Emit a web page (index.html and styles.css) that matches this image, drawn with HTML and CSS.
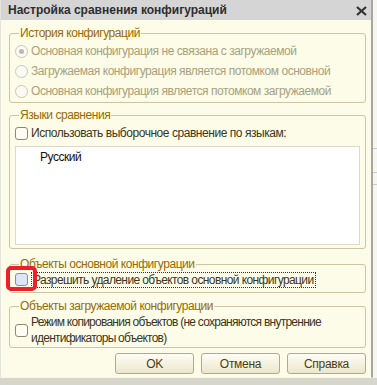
FILE: index.html
```html
<!DOCTYPE html>
<html lang="ru">
<head>
    <meta charset="UTF-8">
    <title>Настройка сравнения конфигураций</title>
    <link rel="stylesheet" href="styles.css">
</head>
<body>
    <div class="screen">
        <div class="dialog">
            <div class="titlebar">
                <span class="title">Настройка сравнения конфигураций</span>
                <svg class="close" width="11" height="10" viewBox="0 0 11 10">
                    <path d="M1 1 L10 9 M10 1 L1 9" stroke="#333" stroke-width="2.2" fill="none"/>
                </svg>
            </div>

            <div class="content">
                <!-- История конфигураций -->
                <div class="group group-history">
                    <span class="group-title">История конфигураций</span>
                    <label class="option disabled"><span class="radio checked"></span>Основная конфигурация не связана с загружаемой</label>
                    <label class="option disabled"><span class="radio"></span>Загружаемая конфигурация является потомком основной</label>
                    <label class="option disabled"><span class="radio"></span>Основная конфигурация является потомком загружаемой</label>
                </div>

                <!-- Языки сравнения -->
                <div class="group group-lang">
                    <span class="group-title">Языки сравнения</span>
                    <label class="option"><span class="checkbox"></span>Использовать выборочное сравнение по языкам:</label>
                    <div class="lang-list">
                        <div class="lang-item">Русский</div>
                    </div>
                </div>

                <!-- Объекты основной конфигурации -->
                <div class="group group-main">
                    <span class="group-title">Объекты основной конфигурации</span>
                    <label class="option option-short"><span class="checkbox hover"></span><span class="focus">Разрешить удаление объектов основной конфигурации</span></label>
                    <span class="marker"></span>
                </div>

                <!-- Объекты загружаемой конфигурации -->
                <div class="group group-loaded">
                    <span class="group-title">Объекты загружаемой конфигурации</span>
                    <label class="option option-multi"><span class="checkbox"></span><span class="multi-text">Режим копирования объектов (не сохраняются внутренние<br>идентификаторы объектов)</span></label>
                </div>

                <div class="buttons">
                    <button class="btn">OK</button>
                    <button class="btn">Отмена</button>
                    <button class="btn">Справка</button>
                </div>
            </div>
        </div>
        <div class="backdrop"></div>
    </div>
</body>
</html>
```

FILE: styles.css
```css
body {
    margin: 0;
    background: #d6d6ca;
    font-family: "Liberation Sans", Arial, sans-serif;
    font-size: 12px;
    letter-spacing: -0.45px;
    color: #3b3520;
}

.screen {
    display: flex;
    height: 378px;
}

.dialog {
    width: 370px;
    border-left: 1px solid #e4e4dc;
    border-right: 2px solid #a6a6a6;
    border-bottom: 1px solid #f6f6f0;
    background: #fcfce9;
    display: flex;
    flex-direction: column;
}

/* Полоска окна позади диалога */
.backdrop {
    flex: 1;
    background:
        linear-gradient(#c9c9cf, #c9c9cf) 0 148px / 100% 1px no-repeat,
        linear-gradient(#c9c9cf, #c9c9cf) 0 172px / 100% 1px no-repeat,
        linear-gradient(#c9c9cf, #c9c9cf) 0 184px / 100% 1px no-repeat,
        #f6f6ef;
}

.titlebar {
    height: 20px;
    background: #d5d5d5;
    display: flex;
    align-items: center;
    justify-content: space-between;
    padding: 0 4px 0 7px;
}

.title {
    font-weight: bold;
    font-size: 12px;
    letter-spacing: 0;
    color: #2e2e2e;
}

.close {
    margin-top: 2px;
}

.content {
    padding: 13px 5px 0 8px;
}

.group {
    position: relative;
    border: 1px solid #cbc5a3;
    border-radius: 3px;
    padding: 7px 5px 1px;
}

/* Заголовок группы лежит поверх верхней линии рамки */
.group-title {
    position: absolute;
    top: -8px;
    left: 9px;
    padding: 0 1px;
    line-height: 15px;
    background: #fcfce9;
    color: #9a6a00;
}

.group-lang {
    margin-top: 12px;
    padding-bottom: 0;
}

.group-main {
    margin-top: 15px;
    padding-top: 6px;
    padding-bottom: 4px;
}

.group-loaded {
    margin-top: 13px;
}

.option {
    display: flex;
    align-items: center;
    height: 20px;
    white-space: nowrap;
}

.option.disabled {
    color: #a9a17b;
}

.radio {
    width: 11px;
    height: 11px;
    border: 1px solid #cbc7b3;
    border-radius: 50%;
    background: #fbfbf6;
    margin-right: 3px;
    flex: none;
    display: flex;
    align-items: center;
    justify-content: center;
}

.radio.checked::after {
    content: "";
    width: 5px;
    height: 5px;
    border-radius: 50%;
    background: #b9b9b2;
}

.checkbox {
    width: 11px;
    height: 11px;
    border: 1px solid #8d8870;
    border-radius: 3px;
    background: #fdfdf4;
    margin-right: 3px;
    flex: none;
}

.checkbox.hover {
    background: #dde6f6;
    border-color: #8490aa;
}

.lang-list {
    margin: 3px 0 3px;
    height: 97px;
    border: 1px solid #dcd9cc;
    background: #fff;
}

.lang-item {
    padding: 3px 0 0 24px;
    color: #111;
}

.option-short {
    height: 17px;
}

.focus {
    border: 1px dotted #333;
    padding: 0 1px;
    line-height: 14px;
    letter-spacing: -0.6px;
}

/* Красная рамка-пометка поверх флажка */
.marker {
    position: absolute;
    left: -4px;
    top: 1px;
    width: 23px;
    height: 17px;
    border: 4px solid #e8212b;
    border-radius: 5px;
}

.option-multi {
    height: auto;
    white-space: nowrap;
    line-height: 16px;
}

.multi-text {
    letter-spacing: -0.75px;
}

.buttons {
    display: flex;
    justify-content: flex-end;
    gap: 7px;
    margin-top: 5px;
}

.btn {
    width: 79px;
    height: 21px;
    border: 1px solid #b6ab7c;
    border-radius: 3px;
    background: linear-gradient(#fefdf5, #ebe6cb);
    font-family: "Liberation Sans", Arial, sans-serif;
    font-size: 12px;
    letter-spacing: -0.3px;
    color: #4a3d18;
    padding: 0;
}
```
